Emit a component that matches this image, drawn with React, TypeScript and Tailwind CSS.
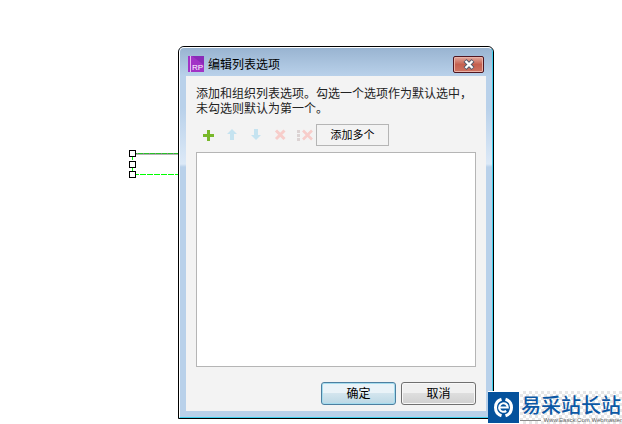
import type { ReactNode } from 'react';

function AppIcon() {
  return (
    <svg width="16" height="16" viewBox="0 0 16 16" aria-hidden="true">
      <rect width="16" height="16" fill="#a233c6" />
      <path d="M4 0h12v9z" fill="#8a2bb8" />
      <rect x="2" width="1" height="16" fill="#e3b8f0" />
      <text x="4" y="14" fill="#fff" fontSize="8" fontFamily="Liberation Sans, sans-serif">
        RP
      </text>
    </svg>
  );
}

function CloseIcon() {
  return (
    <svg width="14" height="11" viewBox="0 0 14 11" aria-hidden="true">
      <path d="M3 1.5l8 8M11 1.5l-8 8" stroke="#53596b" strokeWidth="4.2" />
      <path d="M3.5 2l7 7M10.5 2l-7 7" stroke="#fff" strokeWidth="2.4" />
    </svg>
  );
}

function PlusIcon() {
  return (
    <svg width="24" height="14" viewBox="0 0 24 14" aria-hidden="true">
      <path d="M11 2h3v4h4v3h-4v4h-3V9H7V6h4z" fill="#78b82a" />
    </svg>
  );
}

function ArrowIcon({ down = false }: { down?: boolean }) {
  return (
    <svg width="24" height="14" viewBox="0 0 24 14" aria-hidden="true">
      <path
        d={down ? 'M10 1h4v6h3l-5 5-5-5h3z' : 'M12 1l5 5h-3v6h-4V6H7z'}
        fill="#c5e3f0"
      />
    </svg>
  );
}

function DeleteIcon() {
  return (
    <svg width="24" height="14" viewBox="0 0 24 14" aria-hidden="true">
      <path d="M8 2.5l8.5 8.5M16.5 2.5L8 11" stroke="#f7cdca" strokeWidth="3" />
    </svg>
  );
}

function DeleteAllIcon() {
  return (
    <svg width="24" height="14" viewBox="0 0 24 14" aria-hidden="true">
      <path d="M5 2h3v3H5zM5 6h3v3H5zM5 10h3v3H5z" fill="#dcd3d3" />
      <path d="M11 2.5l9 9M20 2.5l-9 9" stroke="#f7cdca" strokeWidth="2.6" />
    </svg>
  );
}

function ToolButton({ label, disabled, children }: { label: string; disabled?: boolean; children: ReactNode }) {
  return (
    <button type="button" aria-label={label} disabled={disabled} className="flex w-6 items-center justify-center">
      {children}
    </button>
  );
}

function SelectedWidget() {
  return (
    <svg width="50" height="30" viewBox="0 0 50 30" aria-hidden="true">
      <path d="M4 4.5h46" stroke="#b4b4b4" />
      <path d="M4 3.5h46" stroke="#8a7a8a" />
      <path d="M4 3.5h46" stroke="#00e000" strokeDasharray="5 1" opacity="0.7" />
      <path d="M4.5 4v20.5H50" fill="none" stroke="#00ff00" strokeDasharray="6 1" />
      <g fill="#fff" stroke="#000">
        <rect x="1.5" y="0.5" width="6" height="6" />
        <rect x="1.5" y="11.5" width="6" height="6" />
        <rect x="1.5" y="21.5" width="6" height="6" />
      </g>
    </svg>
  );
}

function EditListDialog() {
  return (
    <div
      role="dialog"
      aria-labelledby="dialog-title"
      className="w-[316px] shrink-0 overflow-hidden rounded-t-md border border-black bg-[#b9d1ea]"
    >
      <div className="rounded-t-[5px] border border-t-white border-r-[#3cd0ee] border-b-[#3cd0ee] border-l-white bg-[linear-gradient(to_bottom,#99b4d1_0px,#b9d1ea_28px,#b9d1ea_60px,#dce9f7_116px,#b9d1ea_119px)] px-1.5 pb-1.5">
        <div className="flex h-7 items-center gap-1 px-0.5 pt-1">
          <AppIcon />
          <h1 id="dialog-title" className="flex-1 pt-0.5 text-xs text-black">
            编辑列表选项
          </h1>
          <button
            type="button"
            aria-label="关闭"
            className="flex h-[17px] w-[31px] items-center justify-center rounded-xs border border-[#4f1620] bg-linear-to-b from-[#e2a99f] from-0% via-[#c5604f] via-50% to-[#cf7463] to-100% inset-ring inset-ring-[#e9b3a8]"
          >
            <CloseIcon />
          </button>
        </div>

        <div className="bg-[#f3f3f3] px-2.5 pt-[11px] pb-1.5">
          <p className="text-xs leading-[15px] text-[#222]">
            添加和组织列表选项。勾选一个选项作为默认选中，
            <br />
            未勾选则默认为第一个。
          </p>

          <div className="mt-[7px] flex h-[22px]">
            <ToolButton label="添加">
              <PlusIcon />
            </ToolButton>
            <ToolButton label="上移" disabled>
              <ArrowIcon />
            </ToolButton>
            <ToolButton label="下移" disabled>
              <ArrowIcon down />
            </ToolButton>
            <ToolButton label="删除" disabled>
              <DeleteIcon />
            </ToolButton>
            <ToolButton label="全部删除" disabled>
              <DeleteAllIcon />
            </ToolButton>
            <button type="button" className="w-[73px] border border-[#b5b5b5] text-[11px] leading-5 text-black">
              添加多个
            </button>
          </div>

          <ul role="listbox" aria-label="列表选项" className="mt-1.5 h-[215px] border border-[#b5b5b5] bg-white" />

          <div className="mt-[15px] flex justify-end gap-[5px]">
            <button
              type="button"
              className="h-[23px] w-[75px] rounded-[3px] border border-[#4d7fa0] bg-linear-to-b from-[#eaf3f8] from-50% via-[#d3e5ee] via-50% to-[#bcd8e5] text-xs text-black inset-ring inset-ring-[#a5dcee]"
            >
              确定
            </button>
            <button
              type="button"
              className="h-[23px] w-[75px] rounded-[3px] border border-[#707070] bg-linear-to-b from-[#f0f0f0] from-50% via-[#dedede] via-50% to-[#d0d0d0] text-xs text-black inset-ring inset-ring-[#f8f8f8]"
            >
              取消
            </button>
          </div>
        </div>
      </div>
    </div>
  );
}

function Watermark() {
  return (
    <div className="absolute right-0 bottom-0 flex h-[33px] items-center">
      <svg width="32" height="33" viewBox="0 0 32 33" aria-hidden="true">
        <rect width="32" height="33" fill="#fff" />
        <rect y="1" width="31" height="31" fill="#05529c" />
        <path
          d="M13.5 8.3A8.6 8.6 0 0 0 13.5 24.7M17.5 24.7A8.6 8.6 0 0 0 17.5 8.3"
          fill="none"
          stroke="#fff"
          strokeWidth="3"
        />
        <path
          d="M11 16.5h8.8a4.3 4.3 0 1 0-1.6 3.4"
          fill="none"
          stroke="#fff"
          strokeWidth="2"
        />
      </svg>
      <div className="flex h-[33px] w-[102px] flex-col items-center bg-[repeating-conic-gradient(#e6e6e6_0%_25%,#fff_0%_50%)] bg-size-[6px_6px] pt-1">
        <span className="text-[20px] leading-[22px] font-medium whitespace-nowrap text-[#0b58a5]">易采站长站</span>
        <span className="flex w-full items-center gap-0.5 text-[6px] leading-[6px] whitespace-nowrap text-[#666]">
          <span className="h-px flex-1 bg-[#8a8a8a]" />
          Www.Easck.Com Webmaster
        </span>
      </div>
    </div>
  );
}

export default function App() {
  return (
    <main className="relative flex min-h-screen items-start bg-white pt-[46px] pr-32 pb-[5px] font-['Liberation_Sans','Noto_Sans_CJK_SC',sans-serif]">
      <div className="flex flex-1 justify-end pt-26">
        <SelectedWidget />
      </div>
      <EditListDialog />
      <Watermark />
    </main>
  );
}
